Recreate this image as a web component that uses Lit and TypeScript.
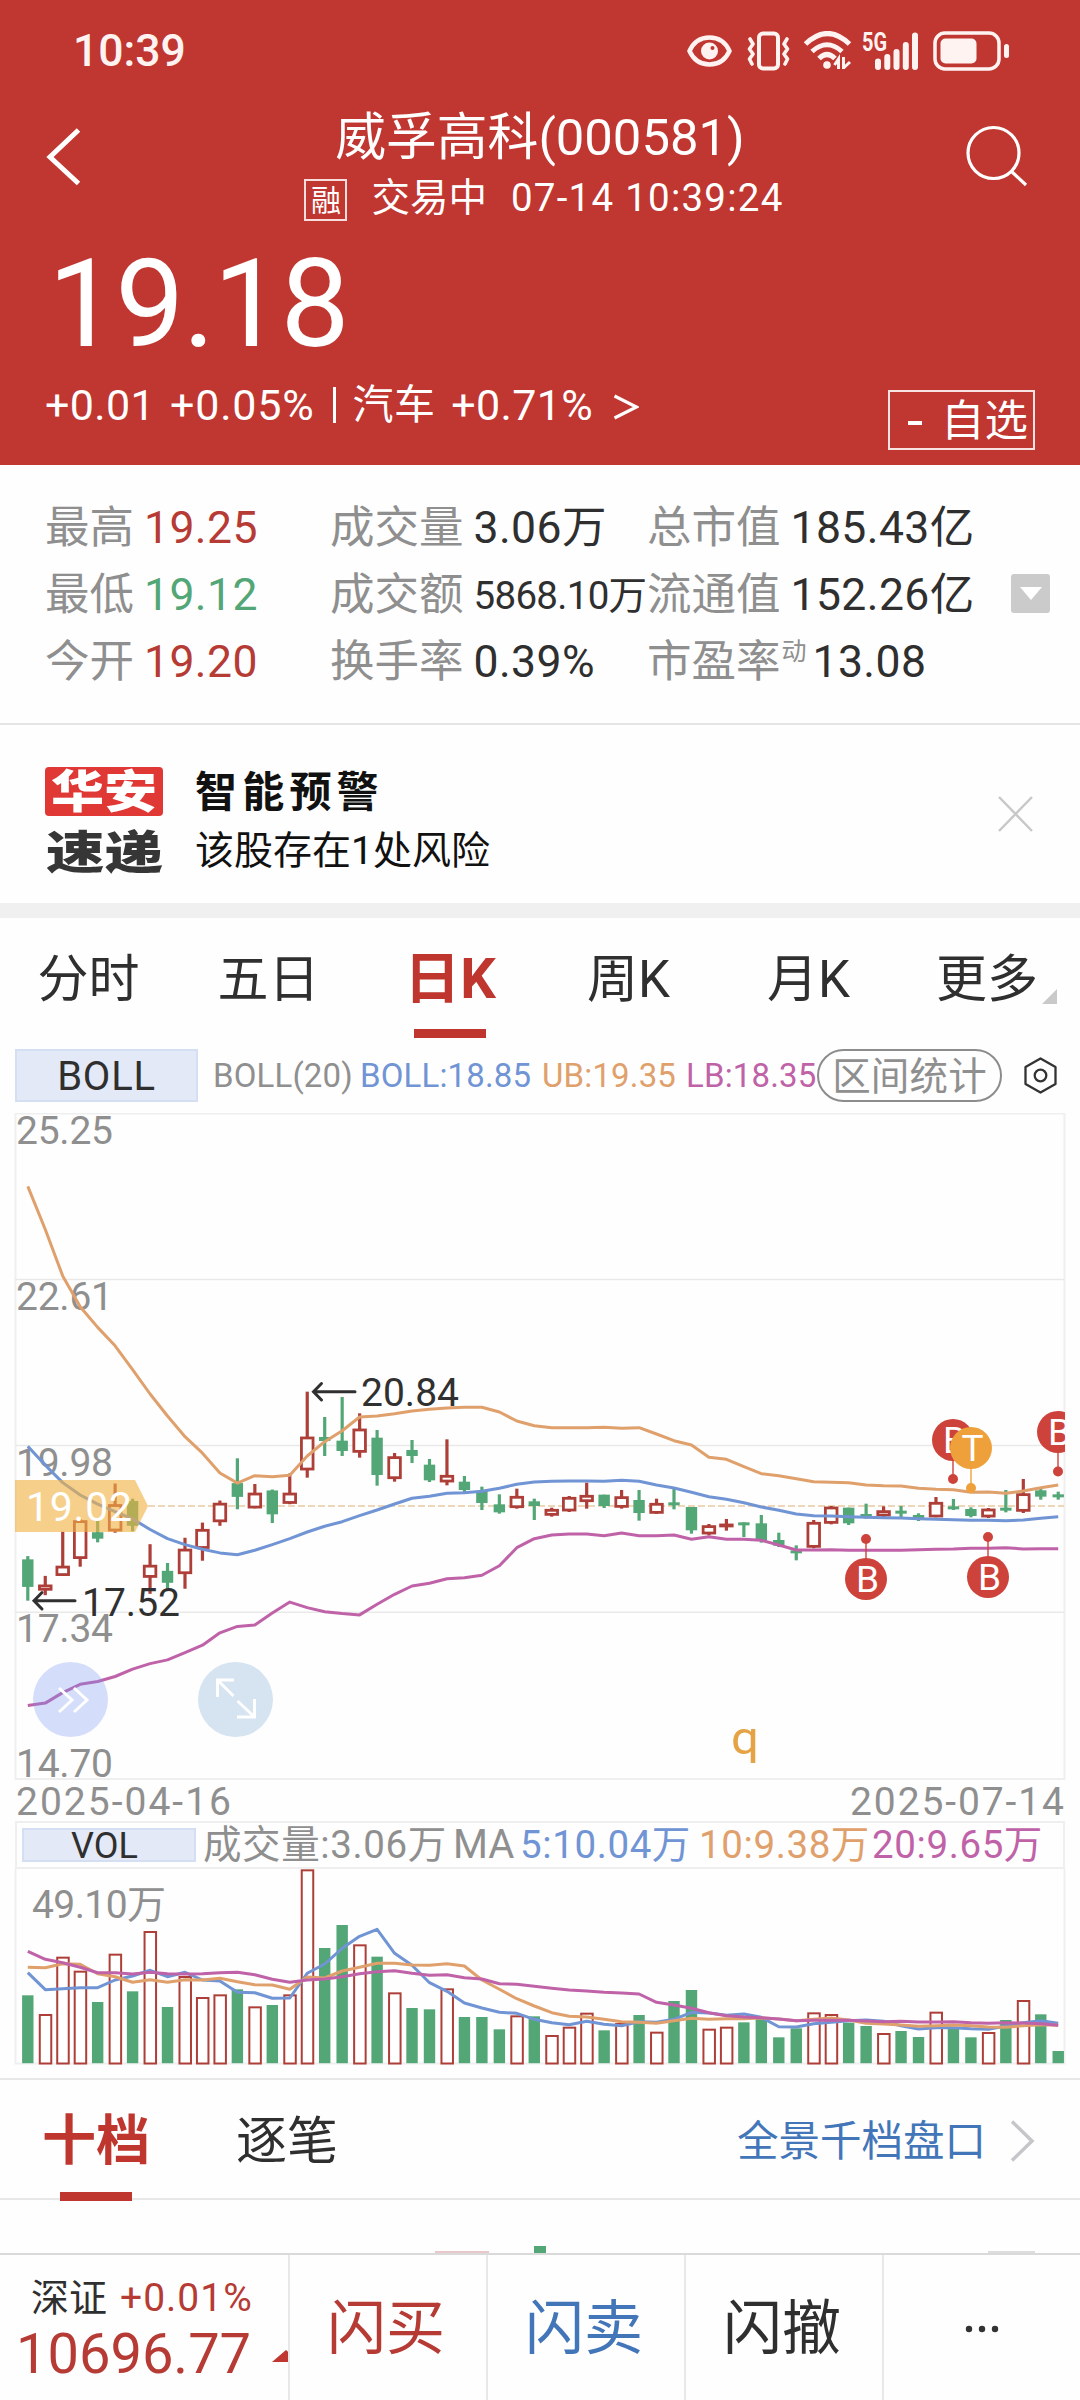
import { LitElement, html, svg, css } from "lit";
import { customElement, property } from "lit/decorators.js";

type Candle = { up: boolean; top: number; bottom: number; high: number; low: number };

const STEP = 17.465;
const FIRST = 27.8;
const cx = (i: number) => FIRST + STEP * i;

/* Candles: direction, body top, body bottom, high, low in chart pixels. */
const candle = (row: string, origin: number, scale: number): Candle[] =>
  row
    .trim()
    .split(/\s+/)
    .map((c) => {
      const [top, bottom, high, low] = c.slice(1).split(",").map((n) => origin + Number(n) / scale);
      return { up: c[0] === "R", top, bottom, high, low };
    });

const candles: Candle[] = [
  ...candle(
    `G1000,1060,993,1090 R1055,1068,1036,1078 R1014,1036,940,1036 R915,999,912,1016 G941,955,915,963
     R880,939,835,942 G873,927,868,939 R1012,1040,967,1075 G1025,1051,1008,1063 R977,1032,953,1064
     R934,977,920,1003 R877,919,872,927 G834,864,780,891 R855,889,836,889 G850,902,848,921 R855,879,813,880`,
    -13, 2.177),
  ...candle(
    `R260,361,125,383 G261,273,201,318 G272,303,141,318 R236,308,190,323 G263,375,240,407 R319,387,309,395
     G300,318,270,339 G344,391,327,396 R375,397,268,406 G395,420,378,430 G423,459,410,480 G463,487,433,491
     R438,474,416,476 G454,468,446,510 R477,497,473,500 R441,484,438,486 R435,456,398,476 G434,468,434,474
     R439,473,420,476 G450,489,420,512 R459,491,446,492 G457,465,415,478 G471,541,471,551`,
    237, 3),
  ...candle(
    `R436,463,432,466 R431,440,417,452 G427,434,427,471 G430,482,405,488 G480,497,458,501 G511,519,496,541
     R426,503,420,505 R380,431,378,433 G383,430,383,435 G402,412,371,416 R391,409,379,411 G392,401,378,415
     G405,415,400,423 R366,412,351,412 G379,385,357,390 G387,408,382,412 R386,412,384,414 G383,392,330,397
     R340,395,297,399 G331,350,327,359 G343,350,335,359`,
    267, 3),
];

const series = (row: string, origin: number, scale: number) =>
  row.split(",").map((n) => origin + Number(n) / scale);

const upper = [
  ...series("188,282,383,450,495,535,587,640,688,733,769,812,834,818,820,817", -13, 2.177),
  ...series("318,275,242,201,198,191,183,178,174,172,172,186,213,227,233,233,233,232,235,233,252,272,285", 237, 3),
  ...series("232,238,260,281,287,296,305,307,308,315,317,318,325,328,329,337,336,340,333,323,315", 267, 3),
];
const middle = [
  ...series("754,795,833,860,880,896,912,935,955,968,978,986,990,980,968,955", -13, 2.177),
  ...series("546,529,515,497,480,462,445,439,430,428,424,415,403,396,394,393,393,394,391,394,405,414,427", 237, 3),
  ...series("350,358,368,381,391,402,407,408,410,412,413,414,416,418,419,421,421,422,420,415,410", 267, 3),
];
const lower = [
  ...series("1318,1313,1290,1272,1266,1255,1239,1227,1219,1203,1187,1160,1146,1143,1117,1093,1105,1114,1118,1121", -13, 2.177),
  ...series("763,733,708,700,686,683,676,647,593,566,555,552,552,557,549,557,557,555,568", 237, 3),
  ...series("470,478,478,481,495,510,510,509,511,511,511,511,509,508,507,505,505,503,507,506,506", 267, 3),
];

const volumes =
  `G646 R702 R530 R572 G666 R521 G634 R453 G681 R588 R651 R643 G628 R679 G675 R643 R268 G504 G435 R493
   G530 R637 G684 G688 R625 G711 G711 G748 R706 G709 R765 R740 R698 G751 R729 G705 R755 G663 G630 R746
   R740 G727 G716 G772 G745 R697 R702 G728 G738 R759 G753 G771 R695 G742 G772 R756 G720 R660 G703 G813`
    .trim().split(/\s+/)
    .map((v) => ({ up: v[0] === "R", top: Number(v.slice(1)) / 3 - 89 }));

const ma5 = series("578,629,626,623,623,600,588,571,590,577,600,603,637,638,655,654,580,552,505,469,448,520,556,608,634,669,684,697,700,718,728,734,724,733,737,725,727,718,697,699,706,702,712,740,741,731,727,722,720,724,737,747,743,743,746,748,738,728,722,730", -89, 3);
const ma10 = series("562,563,551,553,581,590,607,599,607,599,600,595,605,614,615,628,591,594,573,562,550,550,555,556,551,558,600,628,656,678,698,709,711,718,725,727,730,722,715,718,716,716,714,717,722,718,714,720,730,732,735,739,737,735,737,741,742,737,734,736", -89, 3);
const ma20 = series("514,538,548,562,578,578,582,577,581,582,581,578,577,584,598,607,600,597,590,581,575,572,580,586,584,593,597,611,613,619,625,630,633,637,639,642,667,675,685,698,707,711,713,717,722,721,721,721,723,725,724,726,726,725,728,730,728,729,731,736", -89, 3);

const points = (s: number[]) => s.map((y, i) => `${cx(i).toFixed(1)},${y.toFixed(1)}`).join(" ");

const chartText = css`
  svg { display: block; }
  text {
    font-family: Roboto, "Noto Sans CJK SC", sans-serif;
    font-size: 39px;
    fill: #8f8f8f;
  }
  .up { fill: #fff; stroke: #ad3f38; }
  .upline { stroke: #ad3f38; }
  .down { fill: #53a675; }
  .downline { stroke: #53a675; }
  .blue { stroke: #7094d4; }
  .orange { stroke: #e0a06c; }
  .purple { stroke: #bf62a8; }
  .line { fill: none; stroke-width: 3; stroke-linejoin: round; }
  .frame { fill: none; stroke: #efefef; stroke-width: 2; }
  .grid { stroke: #e9e9e9; stroke-width: 1.5; }
`;

@customElement("k-chart")
export class KChart extends LitElement {
  static styles = [
    chartText,
    css`
      :host { display: block; height: 708px; }
      .note { fill: #303030; }
      .arrow { stroke: #303030; stroke-width: 3; fill: none; stroke-linecap: round; }
      .tag { fill: #f0b243; fill-opacity: 0.62; }
      .tagtext { fill: #fff; font-size: 41px; }
      .current { stroke: #eed6b8; stroke-width: 1.8; stroke-dasharray: 7 3; }
      .b { fill: #cd433b; }
      .bline { stroke: #cd433b; stroke-width: 1.4; }
      .t { fill: #eea13b; }
      .tline { stroke: #eea13b; stroke-width: 1.4; }
      .letter { fill: #fff; font-size: 37px; text-anchor: middle; }
      .q { fill: #e5a345; font-size: 47px; }
      .next { fill: #7898f2; fill-opacity: 0.31; }
      .full { fill: #d6e3f1; }
      .glyph { fill: none; stroke: #fff; stroke-width: 3; }
    `,
  ];

  private marker(x: number, y: number, dot: number, kind: "b" | "t") {
    return svg`
      <line class="${kind}line" x1=${x} y1=${y} x2=${x} y2=${dot} />
      <circle class=${kind} cx=${x} cy=${dot} r="5" />
      <circle class=${kind} cx=${x} cy=${y} r="21" />
      <text class="letter" x=${x + 1.5} y=${y + 13}>${kind.toUpperCase()}</text>`;
  }

  private bar(c: Candle, i: number) {
    const x = cx(i);
    const h = Math.max(c.bottom - c.top, 3);
    return svg`
      <line class=${c.up ? "upline" : "downline"} stroke-width="3.2" x1=${x} x2=${x} y1=${c.high} y2=${c.low} />
      ${c.up
        ? svg`<rect class="up" stroke-width="2.8" x=${x - 5.8} y=${c.top + 1.3} width="11.6" height=${Math.max(h - 2.6, 1)} />`
        : svg`<rect class="down" x=${x - 5.7} y=${c.top} width="11.4" height=${h} />`}`;
  }

  render() {
    const labels: [string, number][] = [["25.25", 31], ["22.61", 197], ["19.98", 363], ["17.34", 529], ["14.70", 664]];
    return html`
      <svg width="1080" height="708" viewBox="0 0 1080 708">
        <clipPath id="plot"><rect x="15" y="0" width="1050" height="708" /></clipPath>
        <rect class="frame" x="15.5" y="0.5" width="1049" height="665.5" />
        <path class="grid" d="M15 166.5H1064M15 332.5H1064M15 499.3H1064" />
        ${labels.map(([t, y]) => svg`<text x="16" y=${y} textLength="97">${t}</text>`)}
        <g clip-path="url(#plot)">
          <line class="current" x1="148" x2="1064" y1="393" y2="393" />
          ${candles.map((c, i) => this.bar(c, i))}
          <polyline class="line orange" points=${points(upper)} />
          <polyline class="line blue" points=${points(middle)} />
          <polyline class="line purple" points=${points(lower)} />
          ${this.marker(953, 327, 366, "b")}
          ${this.marker(971, 335, 375, "t")}
          ${this.marker(1058, 319, 358.5, "b")}
          ${this.marker(866, 466, 426, "b")}
          ${this.marker(988, 464, 424, "b")}
        </g>
        <path class="arrow" d="M314 278.7H355M321.5 270.5L313.5 278.7L321.5 287" />
        <text class="note" x="361" y="293" textLength="98">20.84</text>
        <path class="arrow" d="M35 487.7H75M42 479.5L34 487.7L42 496" />
        <text class="note" x="82" y="502.500" textLength="98">17.52</text>
        <path class="tag" d="M15 367H135L148 393L135 419H15Z" />
        <text class="tagtext" x="26" y="408" textLength="106">19.02</text>
        <circle class="next" cx="70.5" cy="586.5" r="37.5" />
        <path class="glyph" d="M59 575L72 587L59 599M74 575L87 587L74 599" />
        <circle class="full" cx="235.5" cy="586.5" r="37.5" />
        <path class="glyph" d="M234 567H217.5V584M217.5 567L233.5 583M237 604H254.5V586M254.5 604L237.5 588" />
        <text class="q" x="731" y="640.500" textLength="28" lengthAdjust="spacingAndGlyphs">q</text>
        <text x="16" y="701.5" textLength="215">2025-04-16</text>
        <text x="850" y="701.5" textLength="214">2025-07-14</text>
      </svg>`;
  }
}

@customElement("volume-chart")
export class VolumeChart extends LitElement {
  static styles = [chartText, css`:host { display: block; height: 209px; } .vol { stroke-width: 2; }`];

  render() {
    return html`
      <svg width="1080" height="209" viewBox="0 0 1080 209">
        <path class="frame" d="M15.5 0V194.5H1064.5V0" />
        <text x="32" y="49" textLength="134">49.10万</text>
        ${volumes.map((v, i) => v.up
          ? svg`<rect class="up vol" x=${cx(i) - 5.5} y=${v.top + 1} width="11.5" height=${193.5 - v.top} />`
          : svg`<rect class="down" x=${cx(i) - 5.7} y=${v.top} width="11.4" height=${194.2 - v.top} />`)}
        <polyline class="line blue" points=${points(ma5)} />
        <polyline class="line orange" points=${points(ma10)} />
        <polyline class="line purple" points=${points(ma20)} />
      </svg>`;
  }
}

@customElement("quote-stat")
export class QuoteStat extends LitElement {
  @property() label = "";
  @property() mark = "";
  @property() value = "";
  @property() tone = "";

  static styles = css`
    :host { display: flex; align-items: center; height: 67px; line-height: 67px; font-size: 44.5px; color: #2f2f2f; white-space: nowrap; }
    .label { color: #8f8f8f; margin-right: 10px; }
    .mark { font-size: 25px; line-height: 25px; color: #8f8f8f; margin: 0 6px 22px -9px; }
    .value { letter-spacing: 0.4px; }
    .red { color: #b53b34; }
    .green { color: #53a675; }
    .small { font-size: 38.5px; letter-spacing: -0.7px; }
  `;

  render() {
    return html`<span class="label">${this.label}</span>
      ${this.mark ? html`<span class="mark">${this.mark}</span>` : ""}
      <span class="value ${this.tone}">${this.value}</span>`;
  }
}

@customElement("app-root")
export class AppRoot extends LitElement {
  static styles = css`
    :host {
      display: flex; flex-direction: column; width: 1080px; height: 2400px; overflow: hidden;
      background: #fefefe; color: #2f2f2f;
      font-family: Roboto, "Noto Sans CJK SC", sans-serif;
    }
    * { box-sizing: border-box; }
    svg { display: block; flex: none; }
    .head { background: #c03630; color: #fff; height: 465px; flex: none; }
    .status { height: 102px; display: flex; align-items: center; justify-content: space-between; padding: 0 71px 0 73px; }
    .clock { font-size: 44.5px; font-weight: 500; color: #fff3f2; }
    .sys { display: flex; align-items: center; }
    .eye { margin-right: 15px; }
    .vib { margin-right: 14px; }
    .wifi { margin-right: 10px; }
    .sig { margin-right: 14px; }
    .g5 { font: 700 25px Roboto, sans-serif; fill: #fff3f2; }
    .nav { height: 126px; display: flex; justify-content: space-between; padding: 4px 52px 0 46px; }
    .names { display: flex; flex-direction: column; align-items: center; padding-left: 32px; }
    .title { height: 62px; line-height: 63px; font-size: 50.8px; }
    .sub { height: 60px; display: flex; align-items: center; font-size: 38.5px; line-height: 60px; padding-left: 8px; }
    .rong { width: 43px; height: 42px; border: 2px solid #f7dedd; font-size: 30px; line-height: 39px; text-align: center; margin: 4px 24px 0 0; }
    .time { margin-left: 24px; letter-spacing: 1.25px; white-space: pre; }
    .back { margin-top: 20px; }
    .search { margin-top: 18px; }
    .price { height: 150px; line-height: 152px; font-size: 123px; letter-spacing: -1.8px; padding-left: 48px; }
    .change { display: flex; height: 87px; padding: 0 45px; align-items: flex-start; font-size: 43px; line-height: 54px; white-space: pre; letter-spacing: 0.35px; }
    .sector { font-size: 41px; margin: 0 16px 0 17px; }
    .bar { width: 3px; height: 36px; background: #fff; margin: 9px 0 0 18px; }
    .pct { margin-left: 15px; letter-spacing: 0.8px; }
    .arrow { margin: 16px 0 0 20px; }
    .fav { margin: 12px 0 0 auto; width: 147px; height: 60px; border: 2px solid #f7e3e2; font-size: 43.5px; line-height: 60px; letter-spacing: 0; display: flex; justify-content: flex-end; padding-right: 5px; }
    .dash { margin-right: 19px; width: 14px; height: 4px; background: #fff; align-self: center; margin-top: 6px; }
    .stats { height: 260px; flex: none; display: flex; border-bottom: 2px solid #e5e5e5; padding: 30px 30px 0 45px; }
    .c1 { width: 285px; flex: none; }
    .c2 { width: 317px; flex: none; }
    .c3 { width: 364px; flex: none; }
    .more { width: 39px; height: 39px; background: #cbcbcb; border-radius: 3px; display: flex; align-items: center; justify-content: center; margin-top: 79px; }
    .alert { height: 178px; flex: none; display: flex; padding: 0 47px 0 45px; align-items: flex-start; }
    .logo { margin-top: 42px; }
    .brand { font: 900 45px "Noto Sans CJK SC", sans-serif; fill: #fff; }
    .dark { fill: #363636; }
    .warn { margin: 36px auto 0 32px; color: #111; }
    .warn-title { font-size: 42px; font-weight: 700; letter-spacing: 5.2px; line-height: 56px; font-family: "Noto Sans CJK SC", sans-serif; }
    .warn-text { font-size: 39px; line-height: 68px; }
    .close { margin-top: 71px; }
    .band { height: 15px; flex: none; background: #f0f0f0; }
    .tabs { height: 131px; flex: none; display: grid; grid-template-columns: repeat(6, 180px); font-size: 51px; line-height: 123px; text-align: center; }
    .tab { display: flex; justify-content: center; height: 120px; padding-right: 3px; }
    .tab.on { flex-direction: column; align-items: center; padding: 0; color: #bf362f; font-weight: 700; font-size: 56px; }
    .tab.on::after { content: ""; width: 72px; height: 9px; background: #bf362f; margin-top: -12px; flex: none; }
    .tab.last { justify-content: flex-end; padding-right: 23px; }
    .corner { margin: 71px 0 0 4px; }
    .indicator { height: 64px; flex: none; display: flex; align-items: flex-start; padding-left: 15px; line-height: 54px; font-size: 33px; color: #8f8f8f; white-space: nowrap; letter-spacing: 0.15px; }
    .chip { width: 183px; height: 53px; border: 2px solid #d5dff4; background: #e3e9f6; color: #2f2f2f; font-size: 40px; line-height: 52px; text-align: center; letter-spacing: 0.8px; margin-right: 15px; }
    .boll { width: 147px; }
    .mid { width: 182px; color: #7094d4; }
    .ub { width: 144px; color: #e0a06c; }
    .lb { width: 131px; color: #bf62a8; }
    .pill { width: 185px; height: 53px; border: 2px solid #8c8c8c; border-radius: 27px; font-size: 38.5px; line-height: 51px; text-align: center; }
    .hex { margin: 7px 0 0 21px; }
    .volhead { height: 48px; flex: none; margin: 0 15px; border: 2px solid #efefef; display: flex; align-items: center; font-size: 38.5px; line-height: 46px; color: #8f8f8f; padding-left: 5px; white-space: nowrap; }
    .volchip { width: 174px; height: 34px; border: 2px solid #d5dff4; background: #e3e9f6; color: #2f2f2f; font-size: 36px; line-height: 32px; text-align: center; padding-right: 9px; margin-right: 7px; }
    .v { letter-spacing: 0.6px; }
    .v0 { width: 250px; }
    .v1 { width: 67px; font-size: 40px; }
    .v2 { width: 179px; color: #7094d4; }
    .v3 { width: 173px; color: #e0a06c; }
    .v4 { color: #bf62a8; }
    .book { height: 122px; flex: none; border-top: 2px solid #e8e8e8; border-bottom: 2px solid #e8e8e8; display: flex; align-items: flex-start; padding: 0 45px 0 42px; line-height: 123px; }
    .ten { height: 121px; font-size: 54px; font-weight: 700; color: #bf362f; display: flex; flex-direction: column; align-items: center; }
    .ten::after { content: ""; width: 72px; height: 9px; background: #bf362f; margin-top: -11px; flex: none; }
    .tick { font-size: 51px; margin-left: 86px; }
    .link { margin-left: auto; color: #4276b9; font-size: 41.5px; }
    .chev { margin: 40px 0 0 24px; }
    .peek { height: 53px; flex: none; display: flex; align-items: flex-end; padding-left: 435px; }
    .p1 { width: 54px; height: 2px; background: #e8c8ca; margin-right: 45px; }
    .p2 { width: 12px; height: 7px; background: #53a675; margin-right: 442px; }
    .p3 { width: 47px; height: 2px; background: #ddd; }
    .foot { flex: 1; border-top: 2px solid #dadada; display: grid; grid-template-columns: 288px 198px 198px 198px 1fr; }
    .cell { border-left: 2px solid #e8e8e8; font-size: 59px; line-height: 147px; text-align: center; padding-right: 4px; }
    .buy { color: #b53b34; }
    .sell { color: #4276b9; }
    .dots { display: flex; justify-content: center; padding: 70px 0 0; }
    .index { padding: 15px 0 0 31px; overflow: hidden; white-space: nowrap; }
    .ix { display: flex; font-size: 38px; line-height: 56px; }
    .ixp { color: #b53b34; margin-left: 13px; font-size: 39px; letter-spacing: 1px; }
    .ixv { display: flex; font-size: 56px; line-height: 56px; color: #b53b34; margin-left: -15px; }
    .tri { margin: 24px 0 0 21px; }
  `;

  private statusIcons() {
    return html`<div class="sys">
      <svg class="eye" width="45" height="40" viewBox="0 0 45 40" fill="none" stroke="#fff3f2">
        <path d="M2.5 20C7 10 14 6.500 22.5 6.500S38 10 42.5 20C38 30 31 33.500 22.5 33.500S7 30 2.5 20Z" stroke-width="4.400" />
        <circle cx="22.5" cy="20" r="8.500" fill="#fff3f2" stroke="none" />
        <circle cx="25.5" cy="17" r="2" fill="#c03630" stroke="none" />
      </svg>
      <svg class="vib" width="43" height="40" viewBox="0 0 43 40" fill="none" stroke="#fff3f2" stroke-width="4" stroke-linejoin="round" stroke-linecap="round">
        <rect x="12" y="2.5" width="19" height="35" rx="4" />
        <path d="M3 8L6 13L2.5 18L6 23L2.5 28L5 33M40 8L37 13L40.5 18L37 23L40.5 28L38 33" stroke-width="3.600" />
      </svg>
      <svg class="wifi" width="48" height="40" viewBox="0 0 48 40" fill="none" stroke="#fff3f2" stroke-width="5">
        <path d="M1.5 13Q23.5 -8 45.5 13" /><path d="M8 20.500Q23 7 38 20.500" /><path d="M15 27.500Q23 19.500 31 27.500" />
        <circle cx="23" cy="34" r="3.8" fill="#fff3f2" stroke="none" />
        <path d="M30.500 34L34.500 28V38M39.500 26V38M39.500 37L46 31" stroke-width="3" />
      </svg>
      <svg class="sig" width="57" height="40" viewBox="0 0 57 40">
        <text class="g5" x="0" y="20" textLength="25" lengthAdjust="spacingAndGlyphs">5G</text>
        <g stroke="#fff3f2" stroke-width="6" stroke-linecap="round">
          <path d="M16 30.500V36M25.3 26V36M34.5 21V36M43.8 14V36M53 4.500V36" />
        </g>
      </svg>
      <svg width="76" height="40" viewBox="0 0 76 40">
        <rect x="2" y="2" width="64" height="36" rx="10" fill="none" stroke="#fff3f2" stroke-width="3.5" />
        <rect x="7.5" y="7.5" width="36" height="25" rx="5" fill="#fff3f2" />
        <rect x="71" y="13" width="5" height="14" rx="2.5" fill="#fff3f2" />
      </svg>
    </div>`;
  }

  render() {
    return html`
      <header class="head">
        <div class="status"><span class="clock">10:39</span>${this.statusIcons()}</div>
        <div class="nav">
          <svg class="back" width="36" height="60" viewBox="0 0 36 60"><path d="M32.5 4L4 31L32.5 57.5" fill="none" stroke="#fff" stroke-width="5" /></svg>
          <div class="names">
            <div class="title">威孚高科(000581)</div>
            <div class="sub"><span class="rong">融</span><span>交易中</span><span class="time">07-14 10:39:24</span></div>
          </div>
          <svg class="search" width="62" height="66" viewBox="0 0 62 66" fill="none" stroke="#fff" stroke-width="3.2"><circle cx="27.500" cy="29" r="25.5" /><path d="M45 47L60 61" /></svg>
        </div>
        <div class="price">19.18</div>
        <div class="change"><span>+0.01</span><span class="pct">+0.05%</span><span class="bar"></span><span class="sector">汽车</span><span>+0.71%</span>
          <svg class="arrow" width="26" height="26" viewBox="0 0 26 26"><path d="M1.5 2L23.5 13L1.5 24" fill="none" stroke="#fff" stroke-width="3.2" /></svg>
          <div class="fav"><span class="dash"></span>自选</div>
        </div>
      </header>
      <section class="stats">
        <div class="c1">
          <quote-stat label="最高" value="19.25" tone="red"></quote-stat>
          <quote-stat label="最低" value="19.12" tone="green"></quote-stat>
          <quote-stat label="今开" value="19.20" tone="red"></quote-stat>
        </div>
        <div class="c2">
          <quote-stat label="成交量" value="3.06万"></quote-stat>
          <quote-stat label="成交额" value="5868.10万" tone="small"></quote-stat>
          <quote-stat label="换手率" value="0.39%"></quote-stat>
        </div>
        <div class="c3">
          <quote-stat label="总市值" value="185.43亿"></quote-stat>
          <quote-stat label="流通值" value="152.26亿"></quote-stat>
          <quote-stat label="市盈率" mark="动" value="13.08"></quote-stat>
        </div>
        <div class="more"><svg width="22" height="13" viewBox="0 0 22 13"><path d="M0 0H22L11 13Z" fill="#fff" /></svg></div>
      </section>
      <section class="alert">
        <svg class="logo" width="118" height="110" viewBox="0 0 118 110">
          <rect width="118" height="49" rx="4" fill="#df3835" />
          <text class="brand" x="6" y="41" textLength="106" lengthAdjust="spacingAndGlyphs">华安</text>
          <text class="brand dark" x="1" y="102" textLength="117" lengthAdjust="spacingAndGlyphs">速递</text>
        </svg>
        <div class="warn"><div class="warn-title">智能预警</div><div class="warn-text">该股存在1处风险</div></div>
        <svg class="close" width="35" height="36" viewBox="0 0 35 36"><path d="M1 1L34 35M34 1L1 35" stroke="#c8c8c8" stroke-width="2.5" /></svg>
      </section>
      <div class="band"></div>
      <nav class="tabs">
        <span class="tab">分时</span><span class="tab">五日</span><span class="tab on">日K</span><span class="tab">周K</span><span class="tab">月K</span>
        <span class="tab last">更多<svg class="corner" width="15" height="15" viewBox="0 0 15 15"><path d="M15 0V15H0Z" fill="#c9c9c9" /></svg></span>
      </nav>
      <div class="indicator">
        <span class="chip">BOLL</span><span class="boll">BOLL(20)</span><span class="mid">BOLL:18.85</span><span class="ub">UB:19.35</span><span class="lb">LB:18.35</span>
        <span class="pill">区间统计</span>
        <svg class="hex" width="36" height="39" viewBox="0 0 36 39" fill="none" stroke="#333" stroke-width="2.3"><path d="M17.5 2.5L32.5 11V28L17.5 36.5L2.5 28V11Z" stroke-linejoin="round" /><circle cx="17.5" cy="19.5" r="5.8" /></svg>
      </div>
      <k-chart></k-chart>
      <div class="volhead">
        <span class="volchip">VOL</span><span class="v v0">成交量:3.06万</span><span class="v1">MA</span><span class="v v2">5:10.04万</span><span class="v v3">10:9.38万</span><span class="v v4">20:9.65万</span>
      </div>
      <volume-chart></volume-chart>
      <div class="book">
        <span class="ten">十档</span><span class="tick">逐笔</span><span class="link">全景千档盘口</span>
        <svg class="chev" width="25" height="42" viewBox="0 0 25 42"><path d="M2 1.5L22 21L2 40.5" fill="none" stroke="#c6c6ca" stroke-width="3.5" /></svg>
      </div>
      <div class="peek"><i class="p1"></i><i class="p2"></i><i class="p3"></i></div>
      <footer class="foot">
        <div class="index">
          <div class="ix">深证<span class="ixp">+0.01%</span></div>
          <div class="ixv">10696.77<svg class="tri" width="28" height="12" viewBox="0 0 28 12"><path d="M0 12L14 0L28 12Z" fill="#c03630" /></svg></div>
        </div>
        <div class="cell buy">闪买</div>
        <div class="cell sell">闪卖</div>
        <div class="cell">闪撤</div>
        <div class="cell dots"><svg width="34" height="8" viewBox="0 0 34 8" fill="#333"><circle cx="4" cy="4" r="3.2" /><circle cx="17" cy="4" r="3.2" /><circle cx="30" cy="4" r="3.2" /></svg></div>
      </footer>`;
  }
}
